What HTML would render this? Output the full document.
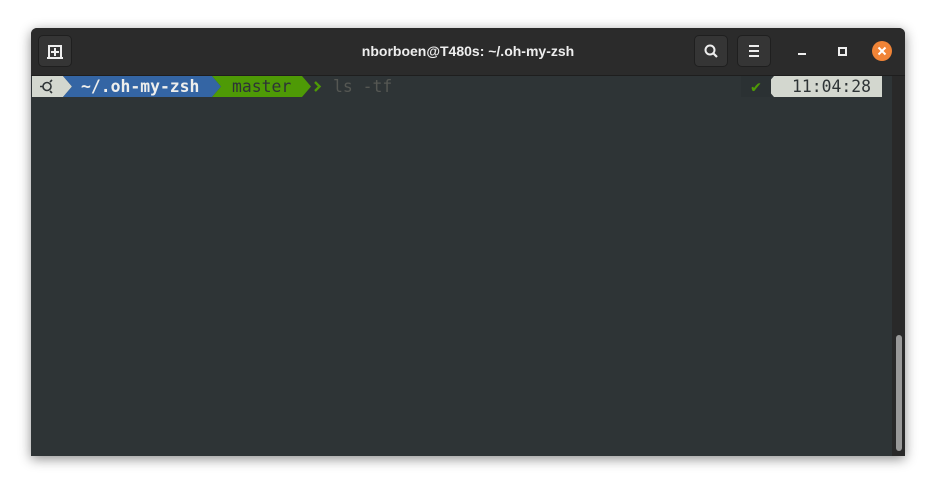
<!DOCTYPE html>
<html><head><style>
body{margin:0;width:940px;height:493px;background:#fff;position:relative;overflow:hidden;font-family:"Liberation Sans",sans-serif}
.win{position:absolute;left:31px;top:28px;width:874px;height:428px;background:#2e3436;box-shadow:0 3px 12px rgba(0,0,0,.45);border-radius:6px 6px 0 0;overflow:hidden}
.tb{position:absolute;left:0;top:0;width:874px;height:47px;background:#2b2b2b;border-bottom:1px solid #1e1e1e}
.btn{position:absolute;top:7px;width:34px;height:32px;background:#353535;border:1px solid #1f1f1f;border-radius:5px;box-sizing:border-box}
.title{position:absolute;left:0;width:874px;top:15px;text-align:center;color:#eee;font-weight:bold;font-size:14px}
.mono{font-family:"DejaVu Sans Mono","Liberation Mono",monospace;font-size:16.4px;position:absolute;top:48px;height:21px;line-height:21px;white-space:pre}
.sb{position:absolute;left:861px;top:48px;width:13px;height:380px;background:#292929}
.th{position:absolute;left:4px;top:259px;width:6px;height:116px;background:#999;border-radius:3px}
</style></head><body>
<div class="win">
<div class="tb">
 <div class="btn" style="left:7px"><svg width="32" height="30" viewBox="0 0 32 30"><path d="M10 22V10h12v12M8 22h16" stroke="#eee" stroke-width="2" fill="none"/><path d="M16 12v8M12 16h8" stroke="#eee" stroke-width="2"/></svg></div>
 <div class="title">nborboen@T480s: ~/.oh-my-zsh</div>
 <div class="btn" style="left:663px"><svg width="32" height="30"><circle cx="15" cy="14" r="4.5" stroke="#eee" stroke-width="2" fill="none"/><path d="M18 17l4 4" stroke="#eee" stroke-width="2.2"/></svg></div>
 <div class="btn" style="left:706px"><svg width="32" height="30"><path d="M11 10h10M11 15h10M11 20h10" stroke="#eee" stroke-width="2"/></svg></div>
 <div style="position:absolute;left:767px;top:25px;width:8px;height:2px;background:#eee"></div>
 <div style="position:absolute;left:807px;top:19px;width:5px;height:5px;border:2px solid #eee"></div>
 <div style="position:absolute;left:841px;top:13px;width:20px;height:20px;border-radius:50%;background:#f08437"><svg width="20" height="20"><path d="M6.5 6.5l7 7M13.5 6.5l-7 7" stroke="#fff" stroke-width="2"/></svg></div>
</div>
<svg style="position:absolute;left:0;top:48px" width="874" height="21">
 <path d="M1 0H32L41 10.5 32 21H1Z" fill="#d3d7cf"/>
 <path d="M32 0H181L190 10.5 181 21H32L41 10.5Z" fill="#3465a4"/>
 <path d="M181 0H271L280 10.5 271 21H181L190 10.5Z" fill="#4e9a06"/>
 <circle cx="16" cy="10.5" r="4" stroke="#2e3436" stroke-width="1.6" fill="none"/>
 <path d="M9 10.5h3M19 6l2-2M19 15l2 2" stroke="#2e3436" stroke-width="1.6"/>
 <path d="M743 0H851V21H743L734 10.5Z" fill="#d3d7cf"/>
 <rect x="710" y="0" width="30" height="21" fill="#2b3133"/>
 <path d="M284 6l4.5 4.5-4.5 4.5" stroke="#4e9a06" stroke-width="2.4" fill="none"/>
</svg>
<div class="mono" style="left:50px;color:#eeeeec;font-weight:bold">~/.oh-my-zsh</div>
<div class="mono" style="left:201px;color:#2e3436">master</div>
<div class="mono" style="left:302px;color:#555753">ls -tf</div>
<div class="mono" style="left:720px;color:#4e9a06">✔</div>
<div class="mono" style="left:761px;color:#2e3436">11:04:28</div>
<div class="sb"><div class="th"></div></div>
</div>
</body></html>
